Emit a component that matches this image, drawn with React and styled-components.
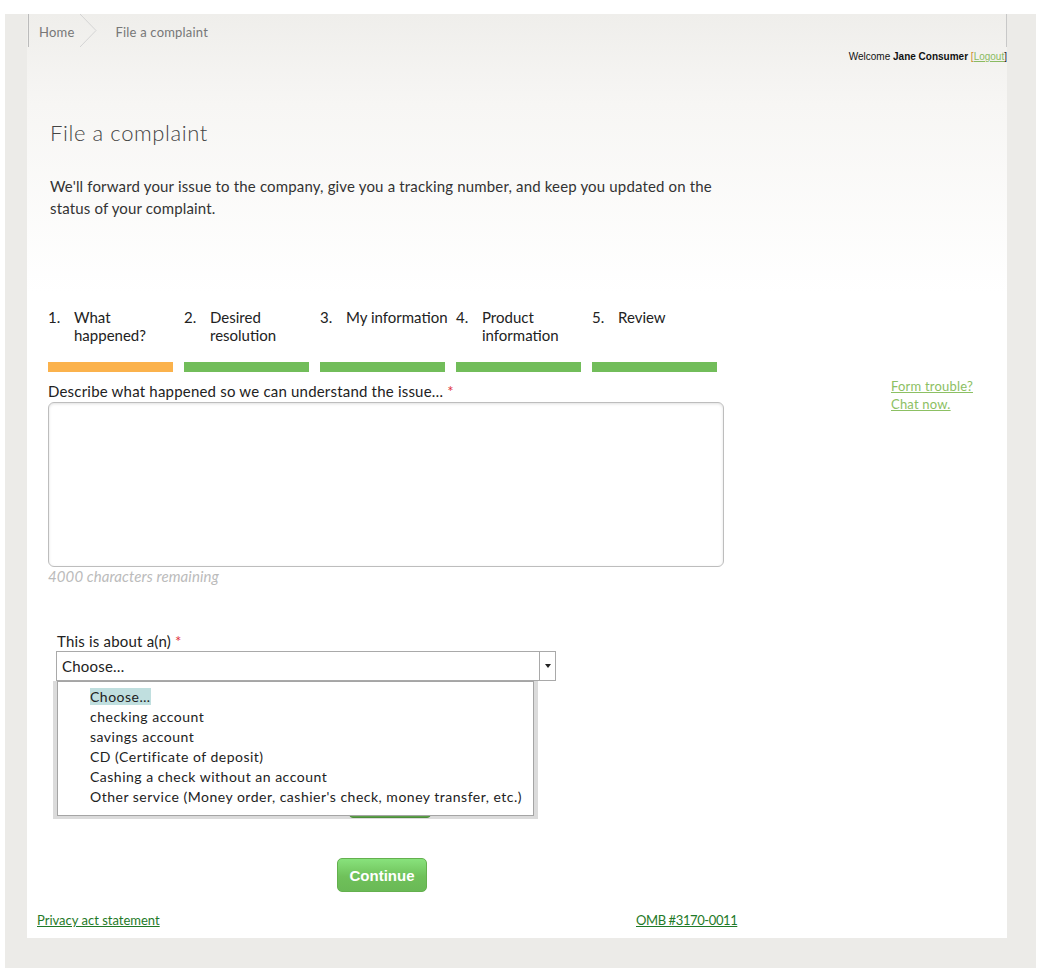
import React from 'react';
import styled, { createGlobalStyle } from 'styled-components';

const GlobalStyle = createGlobalStyle`
  html, body {
    margin: 0;
    padding: 0;
    background: #fff;
  }
  body {
    font-family: Lato, "Open Sans", sans-serif;
    color: #333;
  }
`;

const Frame = styled.div`
  margin: 14px 4px 8px 5px;
  padding: 0 29px 30px 22px;
  background: #ecebe8;
`;

const Panel = styled.div`
  height: 924px;
  background: linear-gradient(#efeeeb 0, #f7f6f4 90px, #fff 280px);
`;

const Header = styled.div`
  display: flex;
  height: 33px;
  border-left: 1px solid #bbb;
  border-right: 1px solid #c8c8c8;
  margin-left: 1px;
`;

const Crumb = styled.a`
  display: flex;
  align-items: center;
  padding: ${(p) => (p.$first ? '3px 0 0 10px' : '3px 0 0 0')};
  font-size: 13px;
  letter-spacing: 0.2px;
  color: #777;
  text-decoration: none;
`;

const Chevron = styled.svg`
  width: 36px;
  height: 33px;
  display: block;
  margin: 0 0 0 5px;
`;

const Welcome = styled.div`
  text-align: right;
  font-family: "Liberation Sans", Arial, sans-serif;
  font-size: 10px;
  line-height: 12px;
  color: #111;
  margin-top: 4px;

  b {
    font-weight: bold;
  }
`;

const Bracket = styled.span`
  color: ${(p) => p.$color};
`;

const LogoutLink = styled.a`
  color: #8aba62;
  text-decoration: underline;
`;

const Content = styled.div`
  padding-left: 21px;
`;

const Title = styled.h1`
  margin: 56px 0 0 2px;
  font-size: 22px;
  line-height: 28px;
  font-weight: 300;
  letter-spacing: 0.6px;
  color: #444;
`;

const Intro = styled.p`
  margin: 28px 0 0 2px;
  width: 680px;
  font-size: 15px;
  line-height: 22px;
  letter-spacing: 0.16px;
  color: #333;
`;

const Steps = styled.div`
  display: grid;
  grid-template-columns: repeat(5, 125px);
  column-gap: 11px;
  margin-top: 89px;
`;

const Step = styled.div`
  display: flex;
  flex-direction: column;
`;

const StepText = styled.div`
  display: flex;
  height: 54px;
  font-size: 15px;
  line-height: 18px;
  color: #222;
`;

const StepNum = styled.span`
  width: 26px;
  flex: none;
`;

const StepLabel = styled.span`
  margin-right: -8px;
`;

const StepBar = styled.div`
  height: 10px;
  background: ${(p) => (p.$active ? '#fbb24c' : '#72bd5a')};
`;

const FormRow = styled.div`
  display: flex;
  margin-top: 10px;
`;

const FormCol = styled.div`
  width: 676px;
`;

const Label = styled.label`
  display: block;
  font-size: 15px;
  line-height: 18px;
  letter-spacing: 0.2px;
  color: #222;
  margin-left: ${(p) => p.$indent || 0}px;
`;

const Req = styled.span`
  color: #e0303a;
`;

const TextArea = styled.textarea`
  display: block;
  box-sizing: border-box;
  width: 676px;
  height: 165px;
  margin-top: 2px;
  border: 1px solid #bdbdbd;
  border-radius: 6px;
  box-shadow: inset 0 1px 3px rgba(0, 0, 0, 0.12);
  resize: none;
  background: #fff;
`;

const Remaining = styled.div`
  font-size: 15px;
  line-height: 18px;
  font-style: italic;
  letter-spacing: 0.1px;
  color: #bbb;
`;

const Aside = styled.div`
  margin: -5px 0 0 167px;
  display: flex;
  flex-direction: column;
`;

const HelpLink = styled.a`
  font-size: 13px;
  line-height: 18px;
  letter-spacing: 0.2px;
  color: #8cc063;
  text-decoration: underline;
`;

const SelectBlock = styled.div`
  margin: 47px 0 0 8px;
  width: 500px;
`;

const SelectWrap = styled.div`
  position: relative;
  margin-top: 1px;
`;

const SelectBox = styled.div`
  display: flex;
  box-sizing: border-box;
  height: 30px;
  border: 1px solid #a9a9a9;
  background: #fff;
  font-size: 15px;
  letter-spacing: 0.2px;
  color: #222;
`;

const SelectValue = styled.div`
  flex: 1;
  padding-left: 5px;
  line-height: 28px;
`;

const SelectArrow = styled.div`
  width: 15px;
  border-left: 1px solid #a9a9a9;
  display: flex;
  align-items: center;
  justify-content: center;

  &::after {
    content: '';
    border-left: 3.5px solid transparent;
    border-right: 3.5px solid transparent;
    border-top: 4px solid #222;
  }
`;

const DropShadow = styled.div`
  position: absolute;
  top: 30px;
  left: -3px;
  width: 477px;
  padding: 0 4px 3px 4px;
  background: rgba(0, 0, 0, 0.14);
  z-index: 2;
`;

const DropList = styled.ul`
  margin: 0;
  padding: 5px 0 8px 32px;
  list-style: none;
  border: 1px solid #a5a5a5;
  background: #fff;
`;

const Option = styled.li`
  font-size: 14px;
  line-height: 20px;
  letter-spacing: 0.5px;
  color: #222;

  span {
    background: ${(p) => (p.$selected ? '#c0dfdf' : 'transparent')};
  }
`;

const HiddenButton = styled.div`
  width: 82px;
  height: 30px;
  margin: 107px 0 0 293px;
  border-radius: 4px;
  background: #6bb955;
  border: 1px solid #5aa545;
  box-sizing: border-box;
`;

const ContinueButton = styled.button`
  display: block;
  width: 90px;
  height: 34px;
  margin: 40px 0 0 289px;
  border: 1px solid #64b04e;
  border-radius: 5px;
  background: linear-gradient(#88e27c, #6fc15a 55%, #6ab956);
  color: #fff;
  font-family: "Liberation Sans", Arial, sans-serif;
  font-size: 15px;
  font-weight: bold;
  cursor: pointer;
`;

const Footer = styled.div`
  display: grid;
  grid-template-columns: 599px auto;
  margin: 21px 0 0 10px;
`;

const FooterLink = styled.a`
  font-size: 13px;
  line-height: 14px;
  letter-spacing: ${(p) => (p.$tight ? '-0.4px' : '0')};
  color: #1f7a28;
  text-decoration: underline;
`;

const steps = [
  ['1.', 'What happened?', true],
  ['2.', 'Desired resolution'],
  ['3.', 'My information'],
  ['4.', 'Product information'],
  ['5.', 'Review'],
];

const options = [
  'Choose…',
  'checking account',
  'savings account',
  'CD (Certificate of deposit)',
  'Cashing a check without an account',
  "Other service (Money order, cashier's check, money transfer, etc.)",
];

export default function App() {
  return (
    <>
      <GlobalStyle />
      <Frame>
        <Panel>
          <Header>
            <Crumb $first href="#">Home</Crumb>
            <Chevron viewBox="0 0 36 33">
              <polyline points="1,0 17,16.5 1,33" fill="none" stroke="#d4d4d4" strokeWidth="1" />
            </Chevron>
            <Crumb href="#">File a complaint</Crumb>
          </Header>
          <Welcome>
            Welcome <b>Jane Consumer</b> <Bracket $color="#c98a2a">[</Bracket>
            <LogoutLink href="#">Logout</LogoutLink>
            <Bracket $color="#222">]</Bracket>
          </Welcome>
          <Content>
            <Title>File a complaint</Title>
            <Intro>
              We'll forward your issue to the company, give you a tracking number, and keep you updated on the status of your complaint.
            </Intro>
            <Steps>
              {steps.map(([n, label, active]) => (
                <Step key={n}>
                  <StepText>
                    <StepNum>{n}</StepNum>
                    <StepLabel>{label}</StepLabel>
                  </StepText>
                  <StepBar $active={active} />
                </Step>
              ))}
            </Steps>
            <FormRow>
              <FormCol>
                <Label>
                  Describe what happened so we can understand the issue… <Req>*</Req>
                </Label>
                <TextArea />
                <Remaining>4000 characters remaining</Remaining>
              </FormCol>
              <Aside>
                <HelpLink href="#">Form trouble?</HelpLink>
                <HelpLink href="#">Chat now.</HelpLink>
              </Aside>
            </FormRow>
            <SelectBlock>
              <Label $indent={1}>
                This is about a(n) <Req>*</Req>
              </Label>
              <SelectWrap>
                <SelectBox>
                  <SelectValue>Choose…</SelectValue>
                  <SelectArrow />
                </SelectBox>
                <DropShadow>
                  <DropList>
                    {options.map((o, i) => (
                      <Option key={o} $selected={i === 0}>
                        <span>{o}</span>
                      </Option>
                    ))}
                  </DropList>
                </DropShadow>
              </SelectWrap>
              <HiddenButton />
            </SelectBlock>
            <ContinueButton>Continue</ContinueButton>
          </Content>
          <Footer>
            <FooterLink href="#">Privacy act statement</FooterLink>
            <FooterLink $tight href="#">OMB #3170-0011</FooterLink>
          </Footer>
        </Panel>
      </Frame>
    </>
  );
}
